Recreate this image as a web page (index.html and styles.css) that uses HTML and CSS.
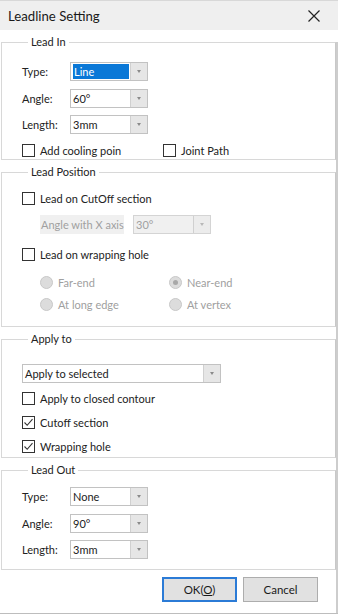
FILE: index.html
```html
<!DOCTYPE html>
<html>
<head>
<meta charset="utf-8">
<link rel="stylesheet" href="styles.css">
</head>
<body>
<div class="dialog">
  <div class="titlebar">
    <span class="title">Leadline Setting</span>
    <svg class="close" width="12" height="12" viewBox="0 0 12 12"><path d="M0.5 0.5 L11.5 11.5 M11.5 0.5 L0.5 11.5" stroke="#222" stroke-width="1.2" fill="none"/></svg>
  </div>

  <div class="content">
  <fieldset class="group g-in">
    <legend>Lead In</legend>
    <div class="form">
      <span class="lbl">Type:</span><div class="combo"><span class="val"><span class="hl">Line</span></span><span class="drop"></span></div>
      <span class="lbl">Angle:</span><div class="combo"><span class="val">60°</span><span class="drop"></span></div>
      <span class="lbl">Length:</span><div class="combo"><span class="val">3mm</span><span class="drop"></span></div>
    </div>
    <div class="checkrow">
      <label class="check w-cool"><span class="box"></span>Add cooling poin</label>
      <label class="check"><span class="box"></span>Joint Path</label>
    </div>
  </fieldset>

  <fieldset class="group g-pos">
    <legend>Lead Position</legend>
    <label class="check c-cut"><span class="box"></span>Lead on CutOff section</label>
    <div class="anglerow">
      <span class="dis-lbl">Angle with X axis</span>
      <div class="combo disabled"><span class="val">30°</span><span class="drop"></span></div>
    </div>
    <label class="check c-wrap"><span class="box"></span>Lead on wrapping hole</label>
    <div class="radios">
      <span class="radio"><span class="circ"></span>Far-end</span>
      <span class="radio"><span class="circ on"></span>Near-end</span>
      <span class="radio"><span class="circ"></span>At long edge</span>
      <span class="radio"><span class="circ"></span>At vertex</span>
    </div>
  </fieldset>

  <fieldset class="group g-apply">
    <legend>Apply to</legend>
    <div class="combo wide"><span class="val">Apply to selected</span><span class="drop"></span></div>
    <div class="checklist">
      <label class="check"><span class="box"></span>Apply to closed contour</label>
      <label class="check"><span class="box checked"><svg width="11" height="11" viewBox="0 0 11 11"><path d="M1.5 5.5 L4.2 8.3 L9.5 2.2" stroke="#333" stroke-width="1.1" fill="none"/></svg></span>Cutoff section</label>
      <label class="check"><span class="box checked"><svg width="11" height="11" viewBox="0 0 11 11"><path d="M1.5 5.5 L4.2 8.3 L9.5 2.2" stroke="#333" stroke-width="1.1" fill="none"/></svg></span>Wrapping hole</label>
    </div>
  </fieldset>

  <fieldset class="group g-out">
    <legend>Lead Out</legend>
    <div class="form">
      <span class="lbl">Type:</span><div class="combo"><span class="val">None</span><span class="drop"></span></div>
      <span class="lbl">Angle:</span><div class="combo"><span class="val">90°</span><span class="drop"></span></div>
      <span class="lbl">Length:</span><div class="combo"><span class="val">3mm</span><span class="drop"></span></div>
    </div>
  </fieldset>

  <div class="buttons">
    <button class="btn default">OK(<u>O</u>)</button>
    <button class="btn">Cancel</button>
  </div>
  </div>
</div>
</body>
</html>
```

FILE: styles.css
```css
* { box-sizing: border-box; }
html, body { margin: 0; padding: 0; background: #ffffff; }
body {
  font-family: Lato, "Noto Sans", sans-serif;
  font-size: 11px;
  color: #222;
}
.dialog {
  width: 338px;
  height: 614px;
  display: flex;
  flex-direction: column;
  border-top: 1px solid #d8d8d8;
  border-bottom: 1px solid #bdbdbd;
  background: #fff;
}
.titlebar {
  height: 29px;
  flex: none;
  background: #efefef;
  display: flex;
  align-items: center;
  justify-content: space-between;
  padding: 0 18px 0 8px;
}
.title { font-size: 13.2px; color: #1a1a1a; }
.close { display: block; }

.content {
  flex: 1;
  display: flex;
  flex-direction: column;
  padding-right: 2px;
  background: linear-gradient(#cdcdcd, #cdcdcd) right 12px / 2px 100% no-repeat;
}

.group {
  margin: 4px 0 0 1px;
  padding: 0 0 0 20px;
  border: 1px solid #d8d8d8;
  border-right-color: #c8c8c8;
  min-width: 0;
}
.group legend {
  margin-left: 6px;
  padding: 0 3px;
  height: 16px;
  line-height: 15px;
  color: #222;
}

.form {
  display: grid;
  grid-template-columns: 48px 78px;
  row-gap: 7.5px;
  align-items: center;
}
.lbl { line-height: 19px; }

.combo {
  height: 19px;
  width: 78px;
  border: 1px solid #c2c2c2;
  background: #fff;
  display: flex;
  align-items: stretch;
}
.combo .val {
  flex: 1;
  padding-left: 2px;
  line-height: 17px;
  display: flex;
  align-items: center;
  white-space: nowrap;
  overflow: hidden;
}
.combo .hl {
  background: #0a78d7;
  color: #fff;
  display: block;
  width: 56px;
  height: 15px;
  line-height: 15px;
  margin-left: 0;
  padding-left: 1px;
}
.combo .drop {
  width: 17px;
  flex: none;
  background: #e6e6e6;
  border-left: 1px solid #d0d0d0;
  position: relative;
}
.combo .drop::after {
  content: "";
  position: absolute;
  left: 6px;
  top: 7px;
  border-left: 2px solid transparent;
  border-right: 2px solid transparent;
  border-top: 3px solid #8a8a8a;
}
.combo.disabled { background: #f0f0f0; border-color: #d4d4d4; }
.combo.disabled .val { color: #a0a0a0; }
.combo.disabled .drop { background: #ececec; }
.combo.disabled .drop::after { border-top-color: #b8b8b8; }
.combo.wide { width: 199px; }

.check {
  display: flex;
  align-items: center;
  height: 16px;
  white-space: nowrap;
}
.box {
  width: 13px;
  height: 13px;
  border: 1px solid #333;
  background: #fff;
  margin-right: 5px;
  flex: none;
  display: flex;
  align-items: center;
  justify-content: center;
}
.box svg { display: block; }

.g-in .form { margin-top: 12px; }
.checkrow { display: flex; margin-top: 8px; margin-bottom: 1px; }
.w-cool { width: 141px; }

.g-pos { padding-bottom: 14px; }
.c-cut { margin-top: 10px; }
.anglerow {
  display: flex;
  align-items: center;
  margin-top: 9px;
  padding-left: 18px;
}
.dis-lbl {
  color: #a0a0a0;
  background: #f0f0f0;
  width: 84px;
  height: 19px;
  line-height: 19px;
  margin-right: 9px;
  padding-left: 1px;
  white-space: nowrap;
}
.c-wrap { margin-top: 12px; }
.radios {
  display: grid;
  grid-template-columns: 129px auto;
  row-gap: 6px;
  margin-top: 12px;
  padding-left: 18px;
}
.radio {
  display: flex;
  align-items: center;
  height: 16px;
  color: #a0a0a0;
  white-space: nowrap;
}
.circ {
  width: 13px;
  height: 13px;
  border-radius: 50%;
  background: #dcdcdc;
  border: 1px solid #c8c8c8;
  margin-right: 5px;
  flex: none;
  position: relative;
}
.circ.on::after {
  content: "";
  position: absolute;
  left: 3px; top: 3px;
  width: 5px; height: 5px;
  border-radius: 50%;
  background: #a8a8a8;
}

.g-apply { padding-bottom: 3px; }
.g-apply .combo.wide { margin-top: 17px; }
.checklist { display: flex; flex-direction: column; gap: 8px; margin-top: 7px; }

.g-out { padding-bottom: 10px; }
.g-out .form { margin-top: 9px; }

.buttons {
  flex: 1;
  display: flex;
  justify-content: flex-end;
  align-items: flex-start;
  gap: 6px;
  padding: 7px 18px 0 0;
}
.btn {
  width: 75px;
  height: 25px;
  font-family: inherit;
  font-size: 11.5px;
  color: #1a1a1a;
  background: #e1e1e1;
  border: 1px solid #adadad;
  padding: 0;
}
.btn.default { border: 2px solid #2b7bd6; }
```
